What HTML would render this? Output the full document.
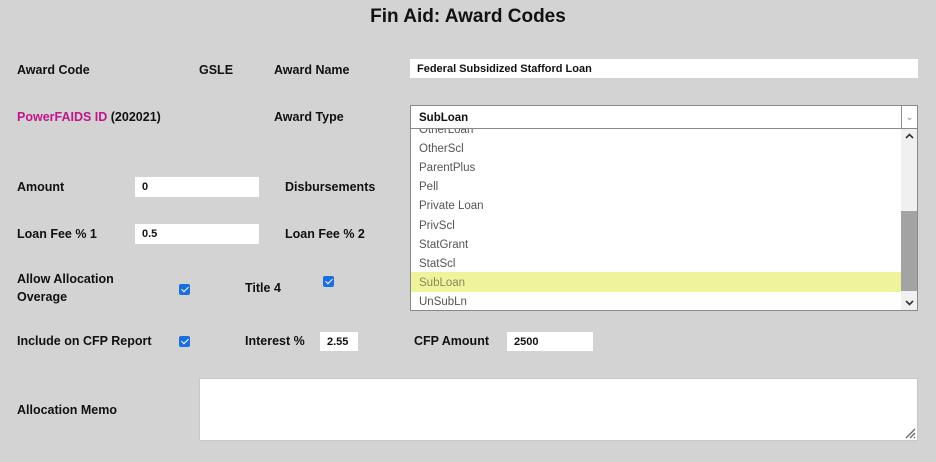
<!DOCTYPE html>
<html><head><meta charset="utf-8"><style>
*{margin:0;padding:0;box-sizing:border-box}
body{width:936px;height:462px;background:#d3d3d3;font-family:"Liberation Sans",sans-serif;position:relative;overflow:hidden;color:#111}
.a{position:absolute;white-space:nowrap}
.l{font-weight:bold;font-size:12.5px;line-height:16px}
.in{position:absolute;background:#fff;font-size:11px;font-weight:bold;padding-left:7px;line-height:21px}
.cb{position:absolute;width:11px;height:11px;background:#1a6fe0;border-radius:2px}
.cb:after{content:"";position:absolute;left:3.5px;top:1px;width:3px;height:6px;border:solid #fff;border-width:0 1.5px 1.5px 0;transform:rotate(45deg)}
.it{position:absolute;left:8px;font-size:11.5px;color:#555;line-height:19px}
</style></head><body>
<div class="a" style="left:0;width:936px;text-align:center;top:6px;font-size:19px;font-weight:bold;line-height:22px">Fin Aid: Award Codes</div>

<div class="a l" style="left:17px;top:62px">Award Code</div>
<div class="a l" style="left:199px;top:62px">GSLE</div>
<div class="a l" style="left:274px;top:62px">Award Name</div>
<div class="in" style="left:410px;top:59px;width:508px;height:19px;line-height:21px">Federal Subsidized Stafford Loan</div>

<div class="a l" style="left:17px;top:109px"><span style="color:#c0168c">PowerFAIDS ID</span> (202021)</div>
<div class="a l" style="left:274px;top:109px">Award Type</div>
<div class="a" style="left:410px;top:105px;width:508px;height:206px;background:#fff;border:1px solid #8a8a8a">
 <div style="position:absolute;left:0;top:0;width:506px;height:23px;border-bottom:1px solid #8a8a8a;font-size:11.5px;font-weight:bold;line-height:25px;padding-left:8px">SubLoan
  <div style="position:absolute;right:0;top:0;width:16px;height:22px;border-left:1px solid #8a8a8a;color:#aaa;font-size:9px;text-align:center;line-height:22px">&#8964;</div></div>
 <div style="position:absolute;left:0;top:23px;width:490px;height:181px;overflow:hidden">
  <div class="it" style="top:-8px">OtherLoan</div>
  <div class="it" style="top:11px">OtherScl</div>
  <div class="it" style="top:30px">ParentPlus</div>
  <div class="it" style="top:49px">Pell</div>
  <div class="it" style="top:68px">Private Loan</div>
  <div class="it" style="top:88px">PrivScl</div>
  <div class="it" style="top:107px">StatGrant</div>
  <div class="it" style="top:126px">StatScl</div>
  <div style="position:absolute;left:0;top:143px;width:490px;height:20px;background:#eef39c"></div>
  <div class="it" style="top:145px;color:#8a8a5a">SubLoan</div>
  <div class="it" style="top:164px">UnSubLn</div>
 </div>
 <div style="position:absolute;left:490px;top:23px;width:16px;height:181px;background:#f0f0f0">
  <div style="position:absolute;top:82px;left:0;width:16px;height:80px;background:#a3a3a3"></div>
  <svg style="position:absolute;top:4px;left:4px" width="9" height="7"><path d="M1 5L4.5 1.5L8 5" stroke="#333" stroke-width="1.6" fill="none"/></svg>
  <svg style="position:absolute;top:170px;left:4px" width="9" height="7"><path d="M1 2L4.5 5.5L8 2" stroke="#333" stroke-width="1.6" fill="none"/></svg>
 </div>
</div>

<div class="a l" style="left:17px;top:179px">Amount</div>
<div class="in" style="left:135px;top:177px;width:124px;height:20px">0</div>
<div class="a l" style="left:285px;top:179px">Disbursements</div>

<div class="a l" style="left:17px;top:226px">Loan Fee % 1</div>
<div class="in" style="left:135px;top:224px;width:124px;height:20px">0.5</div>
<div class="a l" style="left:285px;top:226px">Loan Fee % 2</div>

<div class="a l" style="left:17px;top:270px;line-height:18px">Allow Allocation<br>Overage</div>
<div class="cb" style="left:179px;top:284px"></div>
<div class="a l" style="left:245px;top:280px">Title 4</div>
<div class="cb" style="left:323px;top:276px"></div>

<div class="a l" style="left:17px;top:333px">Include on CFP Report</div>
<div class="cb" style="left:179px;top:336px"></div>
<div class="a l" style="left:245px;top:333px">Interest %</div>
<div class="in" style="left:320px;top:332px;width:38px;height:19px;line-height:20px">2.55</div>
<div class="a l" style="left:414px;top:333px">CFP Amount</div>
<div class="in" style="left:507px;top:332px;width:86px;height:19px;line-height:20px">2500</div>

<div class="a l" style="left:17px;top:402px">Allocation Memo</div>
<div class="a" style="left:199px;top:378px;width:719px;height:63px;background:#fff;border:1px solid #c8c8c8">
 <svg style="position:absolute;right:1px;bottom:1px" width="12" height="12"><path d="M11 2L2 11M11 6L6 11M11 10L10 11" stroke="#666" stroke-width="1.3"/></svg>
</div>
</body></html>
